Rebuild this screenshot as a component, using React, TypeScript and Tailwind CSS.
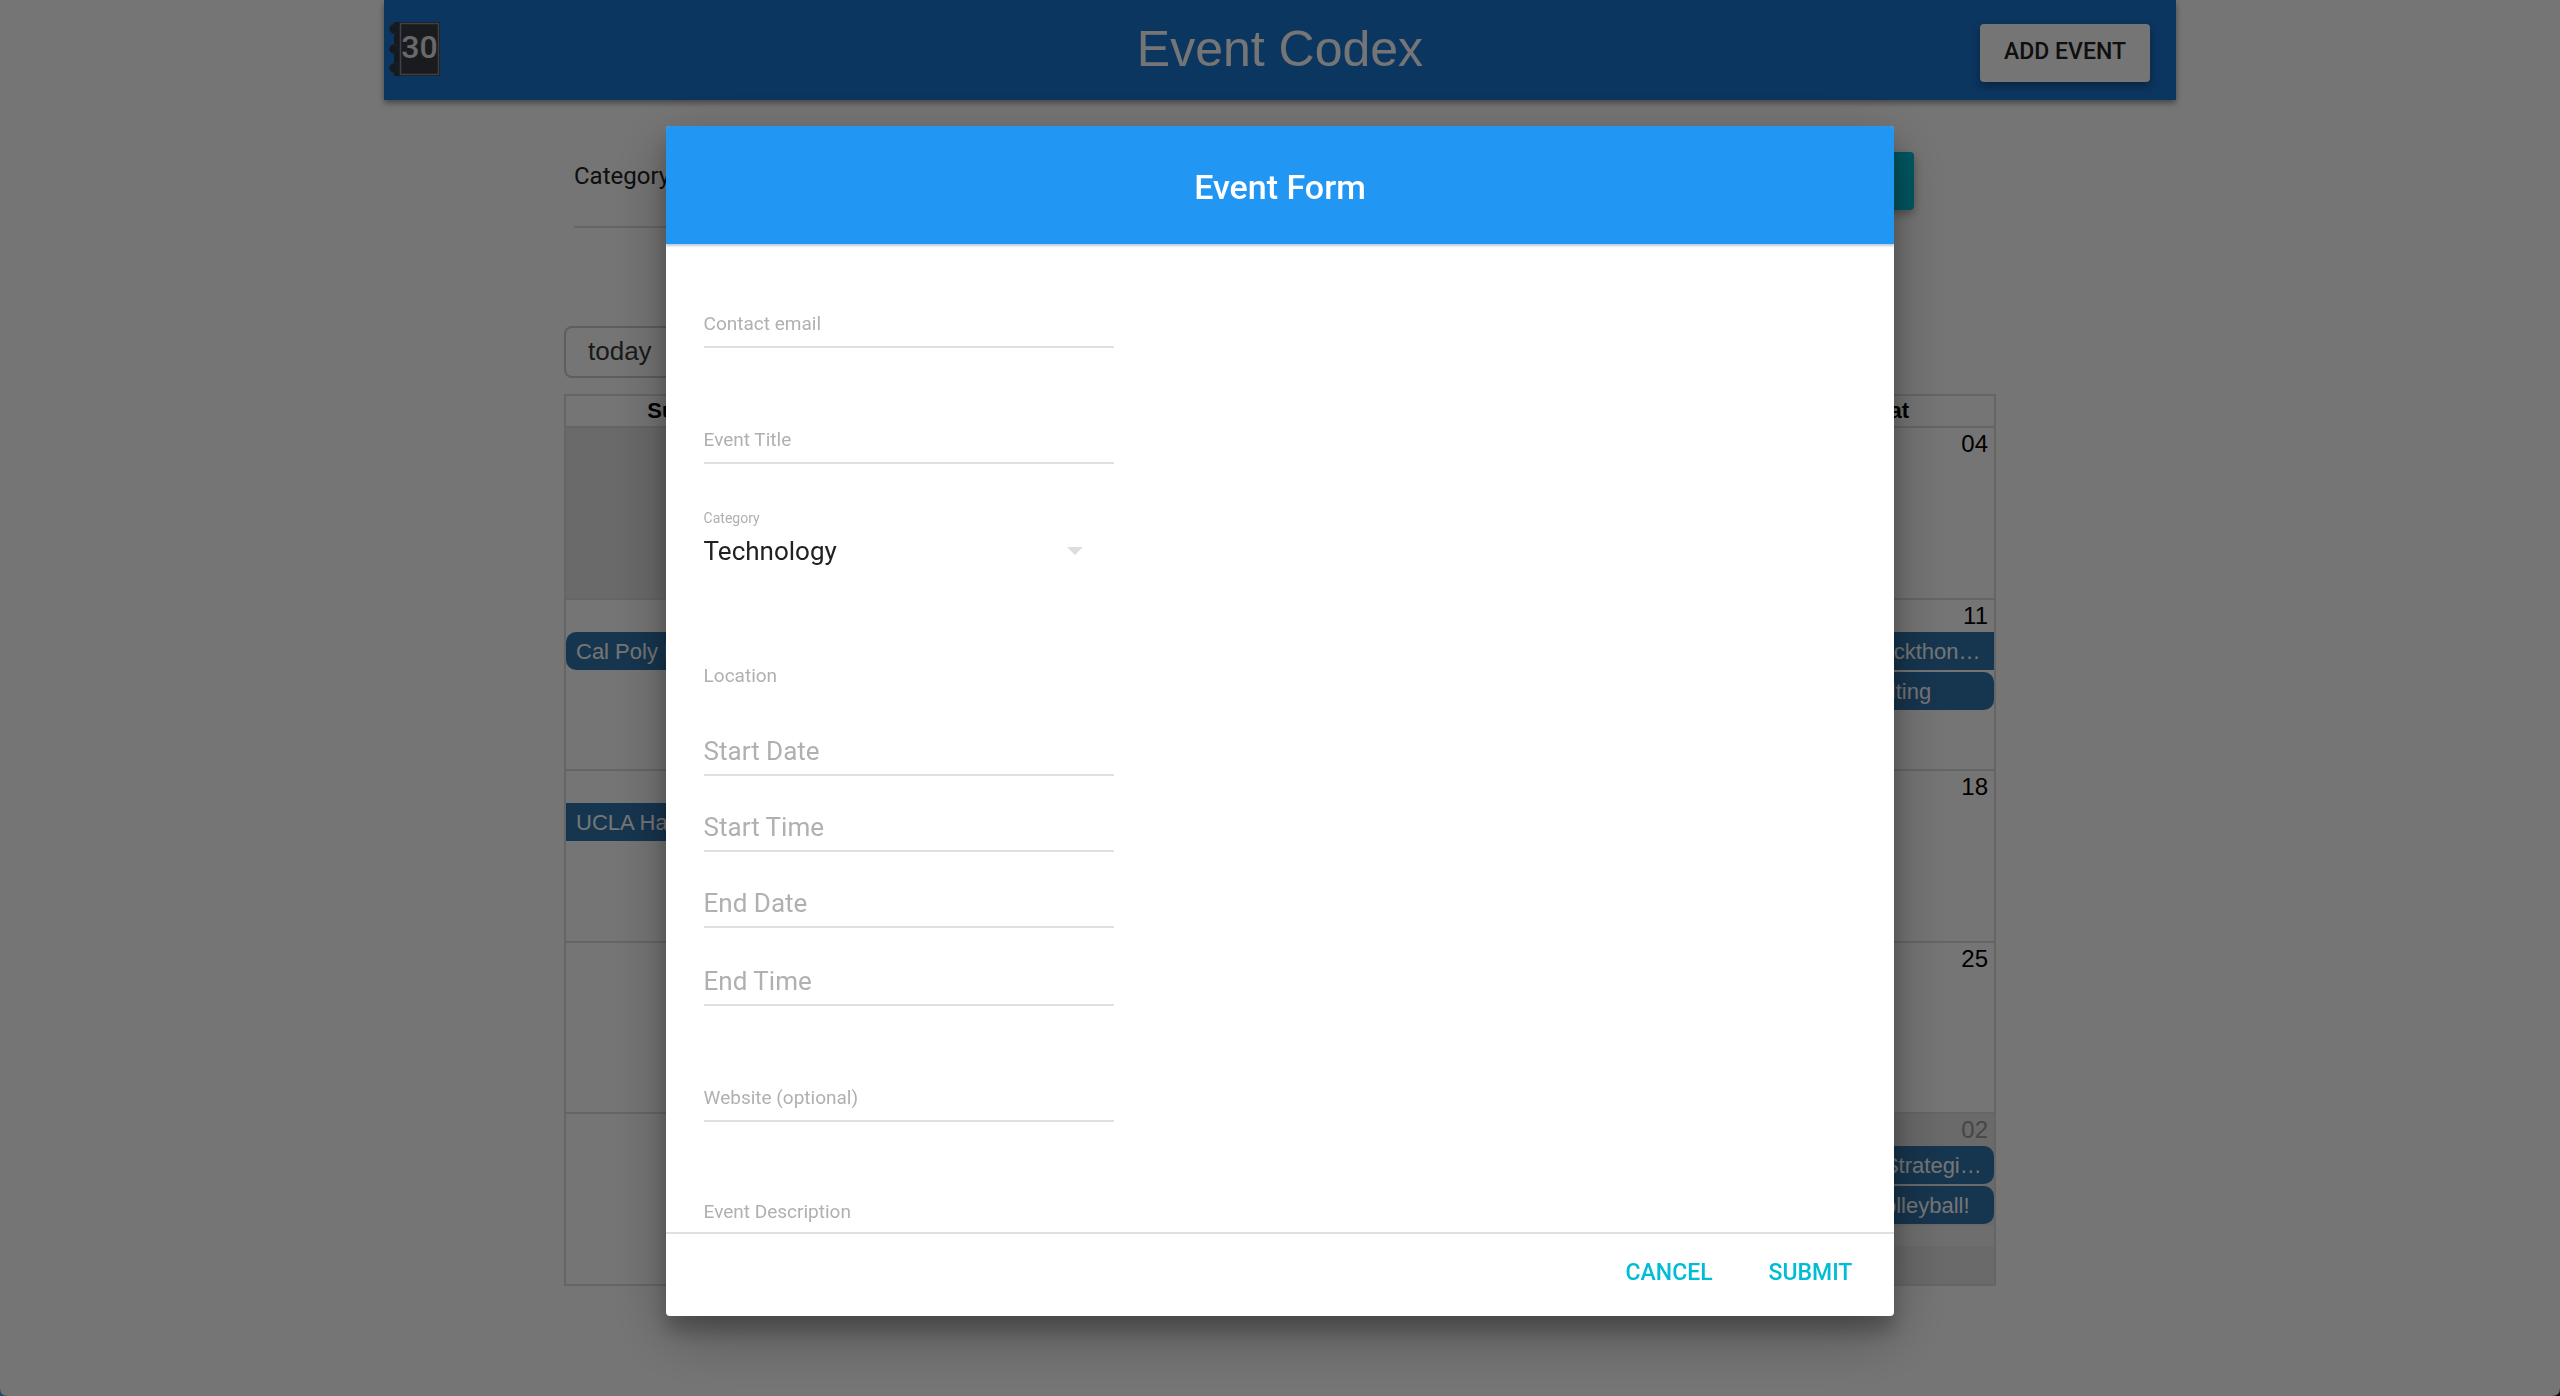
import React from 'react';

type CalendarEvent = { title: string; opensLeft?: boolean; opensRight?: boolean };
type Day = { date: string; off?: boolean; events?: CalendarEvent[]; more?: boolean };

const weekdays = ['Sun', 'Mon', 'Tue', 'Wed', 'Thu', 'Fri', 'Sat'];

const weeks: Day[][] = [
  [
    { date: '29', off: true },
    { date: '30', off: true },
    { date: '31', off: true },
    { date: '01' },
    { date: '02' },
    { date: '03' },
    { date: '04' },
  ],
  [
    { date: '05', events: [{ title: 'Cal Poly Hackathon' }] },
    { date: '06' },
    { date: '07' },
    { date: '08' },
    { date: '09' },
    { date: '10' },
    { date: '11', events: [{ title: 'UCLA Hackthon…', opensRight: true }, { title: 'IT Consulting' }] },
  ],
  [
    { date: '12', events: [{ title: 'UCLA Hackthon', opensLeft: true }] },
    { date: '13' },
    { date: '14' },
    { date: '15' },
    { date: '16' },
    { date: '17' },
    { date: '18' },
  ],
  [
    { date: '19' },
    { date: '20' },
    { date: '21' },
    { date: '22' },
    { date: '23' },
    { date: '24' },
    { date: '25' },
  ],
  [
    { date: '26' },
    { date: '27' },
    { date: '28' },
    { date: '29' },
    { date: '30' },
    { date: '01', off: true },
    { date: '02', off: true, more: true, events: [{ title: 'Product Strategi…' }, { title: 'Beach Volleyball!' }] },
  ],
];

function CalendarLogo() {
  return (
    <svg width="52" height="56" viewBox="0 0 52 56" aria-label="Event Codex logo" role="img">
      <rect x="6" y="1" width="46" height="54" fill="#34373f" />
      <rect x="12.5" y="2.5" width="38" height="51" fill="#3a3b45" stroke="#8d8f96" strokeWidth="1.5" />
      <circle cx="6" cy="8" r="4.5" fill="#34373f" stroke="#1c4f86" strokeWidth="1" />
      <circle cx="6" cy="28" r="4.5" fill="#34373f" stroke="#1c4f86" strokeWidth="1" />
      <circle cx="6" cy="47" r="4.5" fill="#34373f" stroke="#1c4f86" strokeWidth="1" />
      <text
        x="31.5"
        y="37"
        textAnchor="middle"
        fontSize="32"
        fontWeight="500"
        fill="#e4e4e4"
        fontFamily="Roboto, sans-serif"
      >
        30
      </text>
    </svg>
  );
}

function EventBar({ event }: { event: CalendarEvent }) {
  const left = event.opensLeft ? '' : 'rounded-l-[10px]';
  const right = event.opensRight ? '' : 'rounded-r-[10px]';
  return (
    <button
      type="button"
      className={`mb-0.5 block h-[38px] w-full overflow-hidden bg-[#3174ad] px-2.5 text-left text-[22px] leading-10 whitespace-nowrap text-white ${left} ${right}`}
    >
      {event.title}
    </button>
  );
}

function Calendar() {
  return (
    <table className="h-[892px] w-full table-fixed border-separate border-spacing-0 border-2 border-[#ddd]">
      <thead>
        <tr className="h-[30px]">
          {weekdays.map((day) => (
            <th key={day} className="h-[30px] p-0 text-center text-[22px] leading-[30px] font-bold">
              {day}
            </th>
          ))}
        </tr>
      </thead>
      <tbody>
        {weeks.map((week, w) => (
          <tr key={w} className="h-[171px]">
            {week.map((day, d) => (
              <td
                key={d}
                className={`border-t-2 border-[#ddd] p-0 align-top ${d > 0 ? 'border-l-2' : ''} ${day.off ? 'bg-[#e6e6e6]' : ''}`}
              >
                <div className={`pr-1.5 text-right text-2xl leading-8 ${day.off ? 'text-[#999]' : ''}`}>{day.date}</div>
                {day.events?.map((event) => <EventBar key={event.title} event={event} />)}
                {day.more && <div className="h-5 bg-[#f0f0f0]" />}
              </td>
            ))}
          </tr>
        ))}
      </tbody>
    </table>
  );
}

function LineField({ label, small, type = 'text', className = '' }: { label: string; small?: boolean; type?: string; className?: string }) {
  return (
    <input
      type={type}
      aria-label={label}
      placeholder={label}
      className={`block h-12 w-[410px] shrink-0 border-b-2 bg-transparent outline-none placeholder:text-[#b0b0b0] ${small ? 'text-[19px]' : 'text-[26px]'} ${className}`}
    />
  );
}

function EventDialog() {
  return (
    <div className="fixed inset-0 flex justify-center bg-black/54 pt-[126px] pb-20">
      <form
        role="dialog"
        aria-label="Event Form"
        onSubmit={(e) => e.preventDefault()}
        className="flex h-full w-[48%] flex-col overflow-hidden rounded-[4px] bg-white font-[Roboto,sans-serif] shadow-[0_19px_60px_rgba(0,0,0,0.3),0_15px_20px_rgba(0,0,0,0.22)]"
      >
        <header className="z-10 flex h-[118px] shrink-0 items-center justify-center bg-[#2196f3] pt-1 shadow-[0_2px_2px_rgba(33,80,160,0.3)]">
          <h2 className="text-[34px] font-medium text-white">Event Form</h2>
        </header>
        <div className="flex min-h-0 flex-1 flex-col overflow-hidden px-[38px] pt-14">
          <LineField label="Contact email" type="email" small className="mb-[68px] border-[#e0e0e0]" />
          <LineField label="Event Title" small className="mb-11 border-[#e0e0e0]" />
          <label htmlFor="category" className="text-sm leading-5 text-[#b0b0b0]">
            Category
          </label>
          <div className="relative mb-[78px] flex h-[46px] w-[410px] shrink-0 items-center">
            <select
              id="category"
              className="h-full w-full appearance-none bg-transparent text-[26px] text-[#212121] outline-none"
            >
              <option>Technology</option>
            </select>
            <svg className="pointer-events-none absolute right-[31px]" width="16" height="8" viewBox="0 0 16 8" aria-hidden="true">
              <path d="M0 0h16L8 8z" fill="#ddd" />
            </svg>
          </div>
          <LineField label="Location" small className="mb-7 border-transparent" />
          <LineField label="Start Date" className="mb-7 border-[#e0e0e0]" />
          <LineField label="Start Time" className="mb-7 border-[#e0e0e0]" />
          <LineField label="End Date" className="mb-[30px] border-[#e0e0e0]" />
          <LineField label="End Time" className="mb-[68px] border-[#e0e0e0]" />
          <LineField label="Website (optional)" type="url" small className="mb-[66px] border-[#e0e0e0]" />
          <LineField label="Event Description" small className="border-transparent" />
        </div>
        <footer className="flex h-[84px] shrink-0 items-center justify-end gap-14 border-t-2 border-[#e0e0e0] pr-[42px] pb-1">
          <button type="button" className="text-[23px] font-medium text-[#00bcd4]">
            CANCEL
          </button>
          <button type="submit" className="text-[23px] font-medium text-[#00bcd4]">
            SUBMIT
          </button>
        </footer>
      </form>
    </div>
  );
}

export default function App() {
  return (
    <div className="min-h-screen overflow-hidden bg-white font-['Liberation_Sans',Arial,sans-serif] text-black">
      <div className="mx-auto w-[70%]">
        <header className="grid h-[100px] grid-cols-3 items-center bg-[#1976d2] shadow-[0_3px_6px_rgba(0,0,0,0.4)]">
          <div className="pb-0.5 pl-1">
            <CalendarLogo />
          </div>
          <h1 className="pb-0.5 text-center text-[50px] leading-none text-white">Event Codex</h1>
          <button
            type="button"
            className="mt-1.5 mr-[26px] flex h-[58px] w-[170px] items-start justify-center justify-self-end rounded-[4px] bg-white pt-3 font-[Roboto,sans-serif] text-[23px] leading-8 font-medium text-[#212121] shadow-[0_4px_10px_rgba(0,0,0,0.35)]"
          >
            ADD EVENT
          </button>
        </header>
        <main className="px-[180px] pt-[52px]">
          <div className="flex items-start justify-between pr-[82px] pl-2.5">
            <label className="flex h-[76px] w-[400px] border-b-2 border-[#ddd] pt-1.5 font-[Roboto,sans-serif] text-2xl leading-9 text-[#212121]">
              Category
            </label>
            <button type="button" aria-label="Filter" className="h-[58px] w-44 rounded-[4px] bg-[#00bcd4] shadow-[0_4px_10px_rgba(0,0,0,0.3)]" />
          </div>
          <div className="mt-[98px] mb-4 flex">
            <button type="button" className="h-[52px] rounded-l-lg border-2 border-[#ccc] px-[22px] pb-0.5 text-[26px] text-[#373a3c]">
              today
            </button>
            <button type="button" className="h-[52px] w-24 border-2 border-l-0 border-[#ccc]" aria-label="Back" />
          </div>
          <Calendar />
        </main>
      </div>
      <EventDialog />
      <svg className="fixed bottom-0 left-0" width="8" height="8" viewBox="0 0 8 8" aria-hidden="true">
        <path d="M0 0Q0 8 8 8H0z" fill="#1d4a68" />
      </svg>
      <svg className="fixed right-0 bottom-0" width="8" height="8" viewBox="0 0 8 8" aria-hidden="true">
        <path d="M8 0Q8 8 0 8H8z" fill="#111" />
      </svg>
    </div>
  );
}
